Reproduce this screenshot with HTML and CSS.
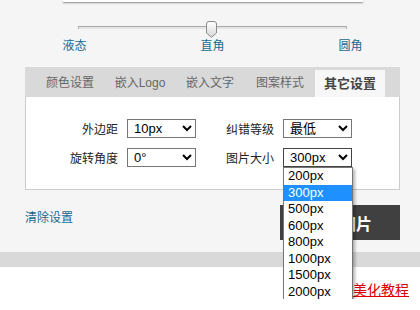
FILE: index.html
```html
<!DOCTYPE html>
<html>
<head>
	<meta charset="utf-8">
	<title>二维码美化</title>
	<link rel="stylesheet" href="styles.css">
</head>
<body>
	<div class="page">
		<div class="card"></div>
		<div class="shape">
			<div class="track">
				<span class="thumb">
					<svg width="11" height="17" viewBox="0 0 11 17">
						<defs>
							<linearGradient id="tg" x1="0" y1="0" x2="0" y2="1">
								<stop offset="0" stop-color="#ffffff"/>
								<stop offset="1" stop-color="#d8d8d8"/>
							</linearGradient>
						</defs>
						<path d="M0.5 3 Q0.5 0.5 3 0.5 L8 0.5 Q10.5 0.5 10.5 3 L10.5 12 L5.5 16.3 L0.5 12 Z" fill="url(#tg)" stroke="#8a8a8a"/>
					</svg>
				</span>
			</div>
			<div class="marks">
				<span>液态</span>
				<span>直角</span>
				<span>圆角</span>
			</div>
		</div>
		<div class="panel">
			<ul class="tabs">
				<li>颜色设置</li>
				<li>嵌入Logo</li>
				<li>嵌入文字</li>
				<li>图案样式</li>
				<li class="on">其它设置</li>
			</ul>
			<div class="body">
				<div class="form">
					<label>外边距</label>
					<select><option>10px</option></select>
					<label>纠错等级</label>
					<select><option>最低</option></select>
					<label>旋转角度</label>
					<select><option>0°</option></select>
					<label>图片大小</label>
					<div class="pick">
						<select><option>300px</option></select>
						<ul class="options">
							<li>200px</li>
							<li class="sel">300px</li>
							<li>500px</li>
							<li>600px</li>
							<li>800px</li>
							<li>1000px</li>
							<li>1500px</li>
							<li>2000px</li>
						</ul>
					</div>
				</div>
			</div>
		</div>
		<div class="actions">
			<a class="reset" href="#">清除设置</a>
			<button class="save">下载图片</button>
		</div>
	</div>
	<div class="band"></div>
	<div class="foot"><a href="#">美化教程</a></div>
</body>
</html>
```
FILE: styles.css
```css
	html, body{
		margin: 0;
		background: #fff;
		font-family: "Liberation Sans", "Noto Sans CJK SC", sans-serif;
	}
	.page{
		background: #f5f5f5;
		padding: 0 20px 0 25px;
	}
	.card{
		width: 300px;
		height: 2px;
		margin: 0 auto;
		background: #fff;
		box-shadow: 0 1px 2px rgba(0,0,0,0.45);
	}
	.shape{
		width: 300px;
		margin: 0 auto;
		padding-top: 24px;
	}
	.track{
		position: relative;
		margin: 0 16px 0 15px;
		height: 2px;
		border-top: 1px solid #a9a9a9;
		border-left: 1px solid #b5b5b5;
		border-right: 1px solid #b5b5b5;
		background: #e4e4e4;
	}
	.thumb{
		position: absolute;
		top: -6px;
		left: 50%;
		margin-left: -6px;
		width: 11px;
		height: 17px;
	}
	.thumb svg{
		display: block;
	}
	.marks{
		display: flex;
		justify-content: space-between;
		margin-top: 9px;
		font-size: 12px;
		line-height: 16px;
		color: #1a6a8f;
	}
	.panel{
		margin-top: 13px;
	}
	.tabs{
		display: flex;
		margin: 0;
		padding: 3px 0 0 10px;
		height: 27px;
		list-style: none;
		background: #d9d9d9;
	}
	.tabs li{
		width: 70px;
		line-height: 27px;
		text-align: center;
		font-size: 12px;
		color: #666;
	}
	.tabs li.on{
		background: #f7f7f7;
		font-size: 13px;
		font-weight: bold;
		color: #444;
	}
	.body{
		background: #fff;
		border: 1px solid #ccc;
		border-top: 0;
		padding: 22px 0 22px;
	}
	.form{
		display: grid;
		grid-template-columns: 101px 69px 87px 69px;
		row-gap: 10px;
		align-items: center;
	}
	.form label{
		text-align: right;
		padding-right: 9px;
		font-size: 12px;
		color: #222;
	}
	.form select{
		box-sizing: border-box;
		width: 69px;
		height: 19px;
		padding: 0 0 0 2px;
		border: 1px solid #767676;
		border-radius: 0;
		background: #fff;
		font-family: "Liberation Sans", "Noto Sans CJK SC", sans-serif;
		font-size: 13px;
		color: #000;
	}
	.pick{
		position: relative;
		height: 19px;
	}
	.pick select{
		border-color: #444;
	}
	.options{
		position: absolute;
		top: 19px;
		left: 0;
		z-index: 5;
		box-sizing: border-box;
		width: 70px;
		margin: 0;
		padding: 0;
		list-style: none;
		background: #fff;
		border: 1px solid #767676;
		box-shadow: 2px 2px 3px rgba(0,0,0,0.3);
	}
	.options li{
		height: 16.5px;
		line-height: 16.5px;
		padding-left: 4px;
		font-size: 13px;
		color: #000;
	}
	.options li.sel{
		background: #1e90ff;
		color: #fff;
	}
	.actions{
		display: flex;
		justify-content: space-between;
		align-items: flex-start;
		margin-top: 15px;
		padding-bottom: 12px;
	}
	.reset{
		padding-top: 5px;
		font-size: 12px;
		line-height: 16px;
		color: #1a6a8f;
		text-decoration: none;
	}
	.save{
		width: 120px;
		height: 35px;
		border: 0;
		background: #404040;
		color: #fff;
		font-family: "Liberation Sans", "Noto Sans CJK SC", sans-serif;
		font-size: 16px;
		font-weight: bold;
	}
	.band{
		height: 15px;
		background: #d9d9d9;
	}
	.foot{
		text-align: right;
		padding: 14px 11px 0 0;
		font-size: 14px;
		line-height: 18px;
	}
	.foot a{
		color: #d00;
		text-decoration: underline;
	}
```
